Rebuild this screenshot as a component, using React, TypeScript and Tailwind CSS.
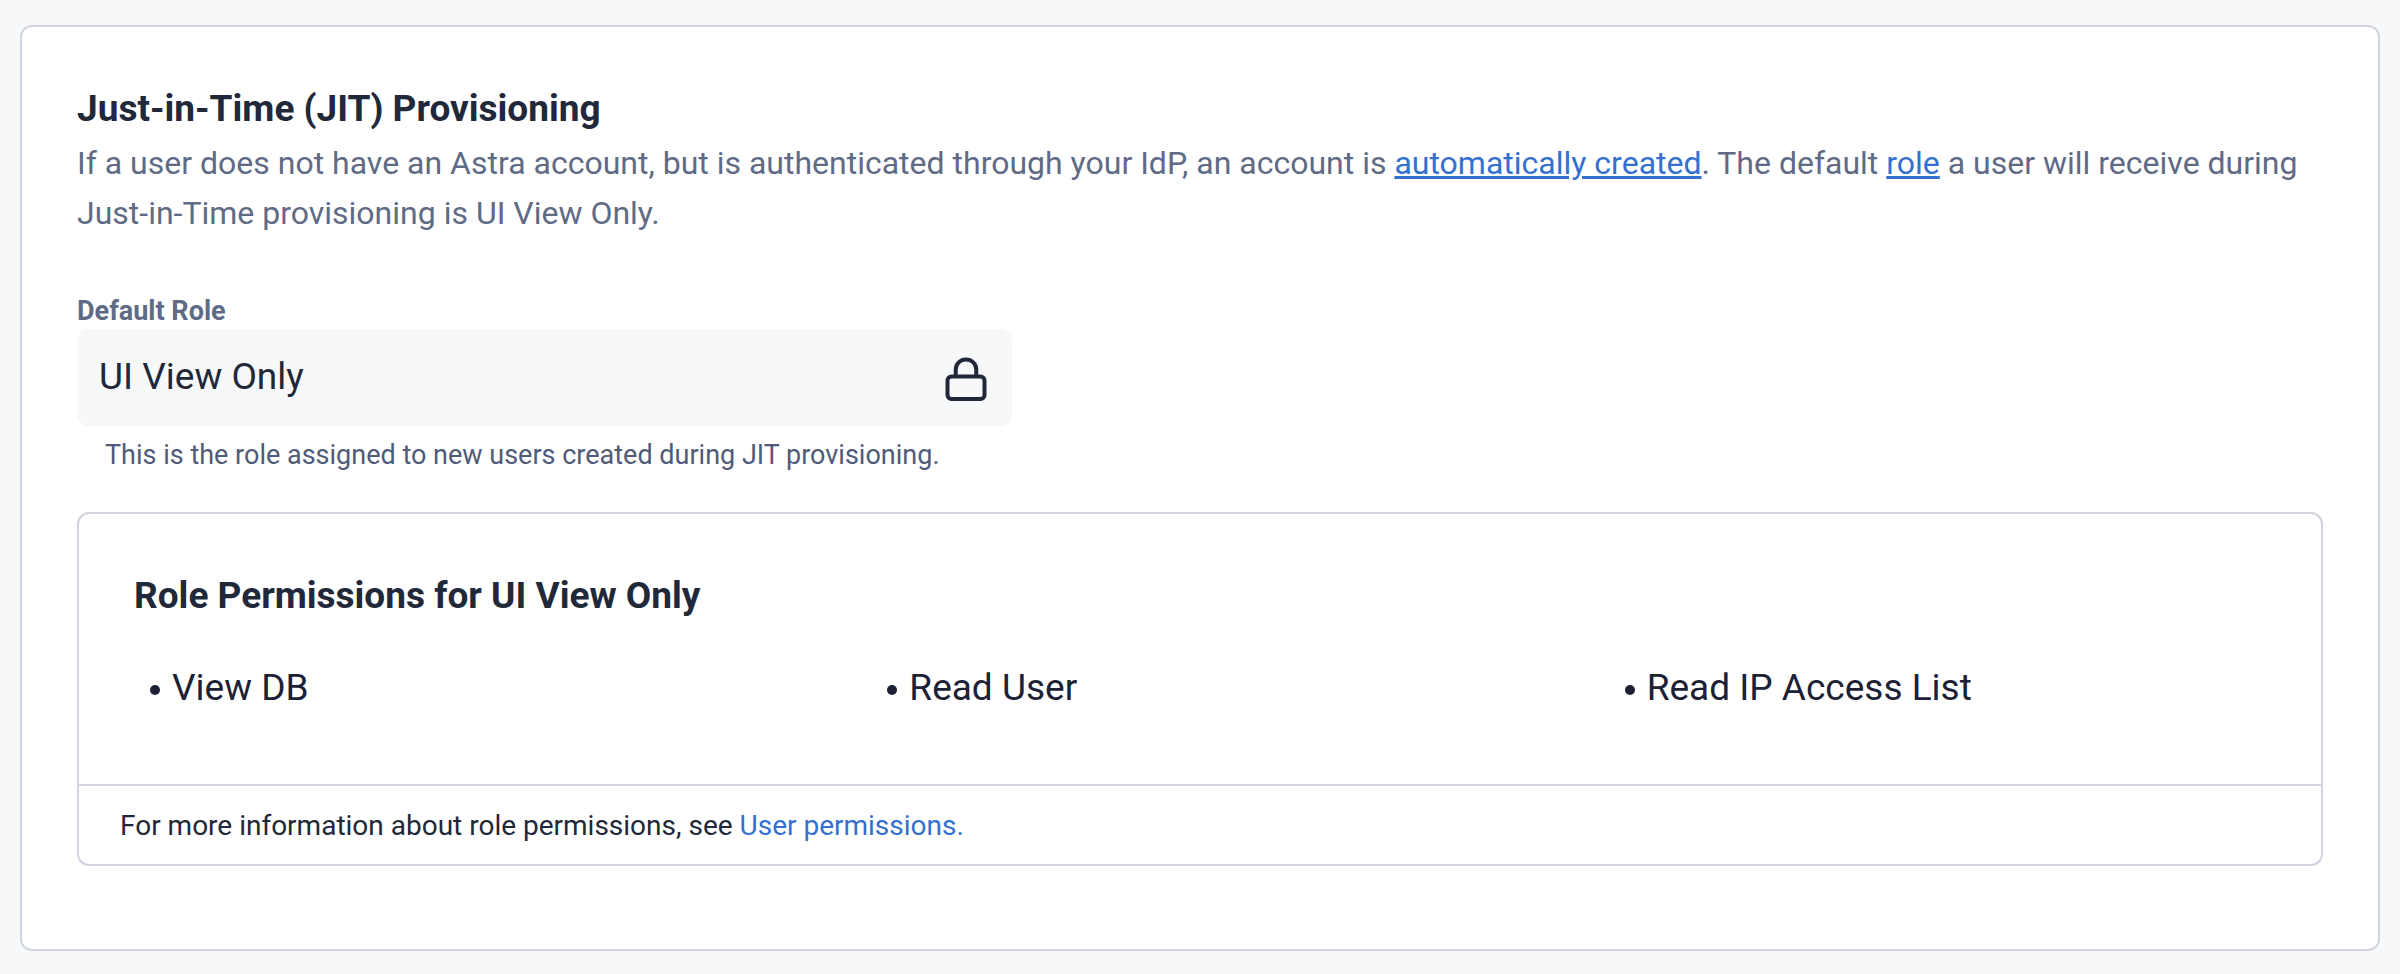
const permissions = ["View DB", "Read User", "Read IP Access List"];

function LockIcon() {
  return (
    <svg
      className="mt-1 h-12 w-12 shrink-0"
      viewBox="0 0 48 48"
      fill="none"
      stroke="currentColor"
      strokeWidth="4"
      aria-hidden="true"
    >
      <rect x="5.5" y="21.5" width="37" height="22.5" rx="4" />
      <path d="M13.75 21.5V14.5a10.25 10 0 0 1 20.5 0v7" />
    </svg>
  );
}

export default function App() {
  return (
    <main className="min-h-screen bg-[#f7f8fa] px-5 pt-[25px] pb-[22px] font-['Roboto',sans-serif] text-[#202839]">
      <section className="rounded-xl border-2 border-[#d0d4e0] bg-white px-[55px] pt-[57px] pb-[83px]">
        <h2 className="text-[37px] leading-[50px] font-bold">Just-in-Time (JIT) Provisioning</h2>
        <p className="mt-1 text-[32px] leading-[50px] text-[#5f6b85]">
          If a user does not have an Astra account, but is authenticated through your IdP, an account is{" "}
          <a href="#created" className="text-[#3470d0] underline">automatically created</a>. The default{" "}
          <a href="#role" className="text-[#3470d0] underline">role</a> a user will receive during Just-in-Time
          provisioning is UI View Only.
        </p>

        <div className="mt-[55px] max-w-[935px]">
          <label htmlFor="default-role" className="block text-[27px] leading-9 font-bold text-[#5f6b85]">
            Default Role
          </label>
          <div className="flex items-center gap-4 rounded-xl bg-[#f7f8fa] pt-[22px] pb-6 pr-[22px] pl-[22px]">
            <input
              id="default-role"
              className="min-w-0 flex-1 bg-transparent text-[37px] leading-[50px] outline-none"
              value="UI View Only"
              aria-describedby="default-role-help"
              readOnly
            />
            <LockIcon />
          </div>
          <p id="default-role-help" className="mt-[10px] pl-7 text-[27px] leading-9 text-[#4f5b78]">
            This is the role assigned to new users created during JIT provisioning.
          </p>
        </div>

        <section className="mt-[39px] rounded-xl border-2 border-[#d0d4e0]">
          <div className="px-[55px] pt-[57px] pb-[71px]">
            <h3 className="text-[37px] leading-[50px] font-bold">Role Permissions for UI View Only</h3>
            <ul className="mt-[42px] grid grid-cols-3 gap-20 text-[37px] leading-[50px] text-[#1c2136]">
              {permissions.map((name) => (
                <li key={name} className="flex items-center gap-3 pl-4">
                  <span className="mt-1 size-[10px] rounded-full bg-[#1c2136]" />
                  {name}
                </li>
              ))}
            </ul>
          </div>
          <p className="border-t-2 border-[#d0d4e0] px-[41px] pt-[22px] pb-5 text-[28px] leading-9">
            For more information about role permissions, see{" "}
            <a href="#permissions" className="text-[#3470d0]">User permissions.</a>
          </p>
        </section>
      </section>
    </main>
  );
}
